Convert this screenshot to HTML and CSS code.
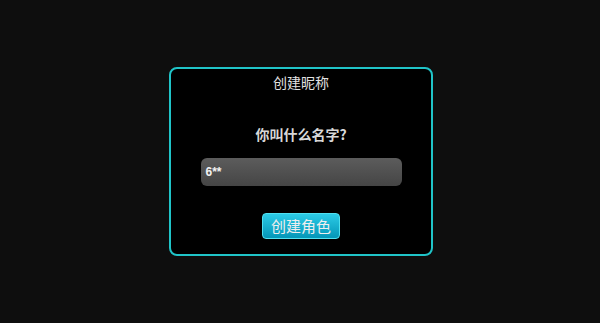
FILE: index.html
```html
<!DOCTYPE html>
<html lang="zh">
<head>
    <meta charset="UTF-8">
    <title>创建昵称</title>
    <link rel="stylesheet" href="styles.css">
</head>
<body>
    <div class="panel">
        <div class="title">创建昵称</div>
        <div class="question">你叫什么名字?</div>
        <div class="name-input">6**</div>
        <button class="btn">创建角色</button>
    </div>
</body>
</html>
```

FILE: styles.css
```css
html, body {
    margin: 0;
    height: 100%;
}
body {
    background: #0e0e0e;
    font-family: "Noto Sans CJK SC", "Liberation Sans", sans-serif;
    color: #e2e2e2;
    display: flex;
    justify-content: center;
    align-items: flex-start;
}
.panel {
    margin-top: 67px;
    margin-left: 2px;
    width: 260px;
    height: 185px;
    border: 2px solid #20c4c8;
    border-radius: 8px;
    background: #000;
    display: flex;
    flex-direction: column;
    align-items: center;
}
.title {
    font-size: 14px;
    line-height: 20px;
    margin-top: 3px;
}
.question {
    font-size: 14px;
    font-weight: bold;
    line-height: 20px;
    margin-top: 32px;
    color: #d8d8d8;
}
.name-input {
    box-sizing: border-box;
    width: 201px;
    height: 28px;
    margin-top: 14px;
    padding-left: 5px;
    border-radius: 6px;
    background: linear-gradient(#5c5c5c, #454545);
    font-family: "Liberation Sans", sans-serif;
    font-size: 12px;
    font-weight: bold;
    line-height: 28px;
    color: #f2f2f2;
}
.btn {
    box-sizing: border-box;
    width: 78px;
    height: 26px;
    margin-top: 27px;
    padding: 0;
    border: 1px solid #4fe0f0;
    border-radius: 4px;
    background: linear-gradient(#2ccbe6, #0496b8);
    color: #eeeeee;
    font-family: "Noto Sans CJK SC", sans-serif;
    font-size: 15px;
    line-height: 24px;
    box-shadow: 0 2px 3px rgba(0,0,0,0.6);
}
```
